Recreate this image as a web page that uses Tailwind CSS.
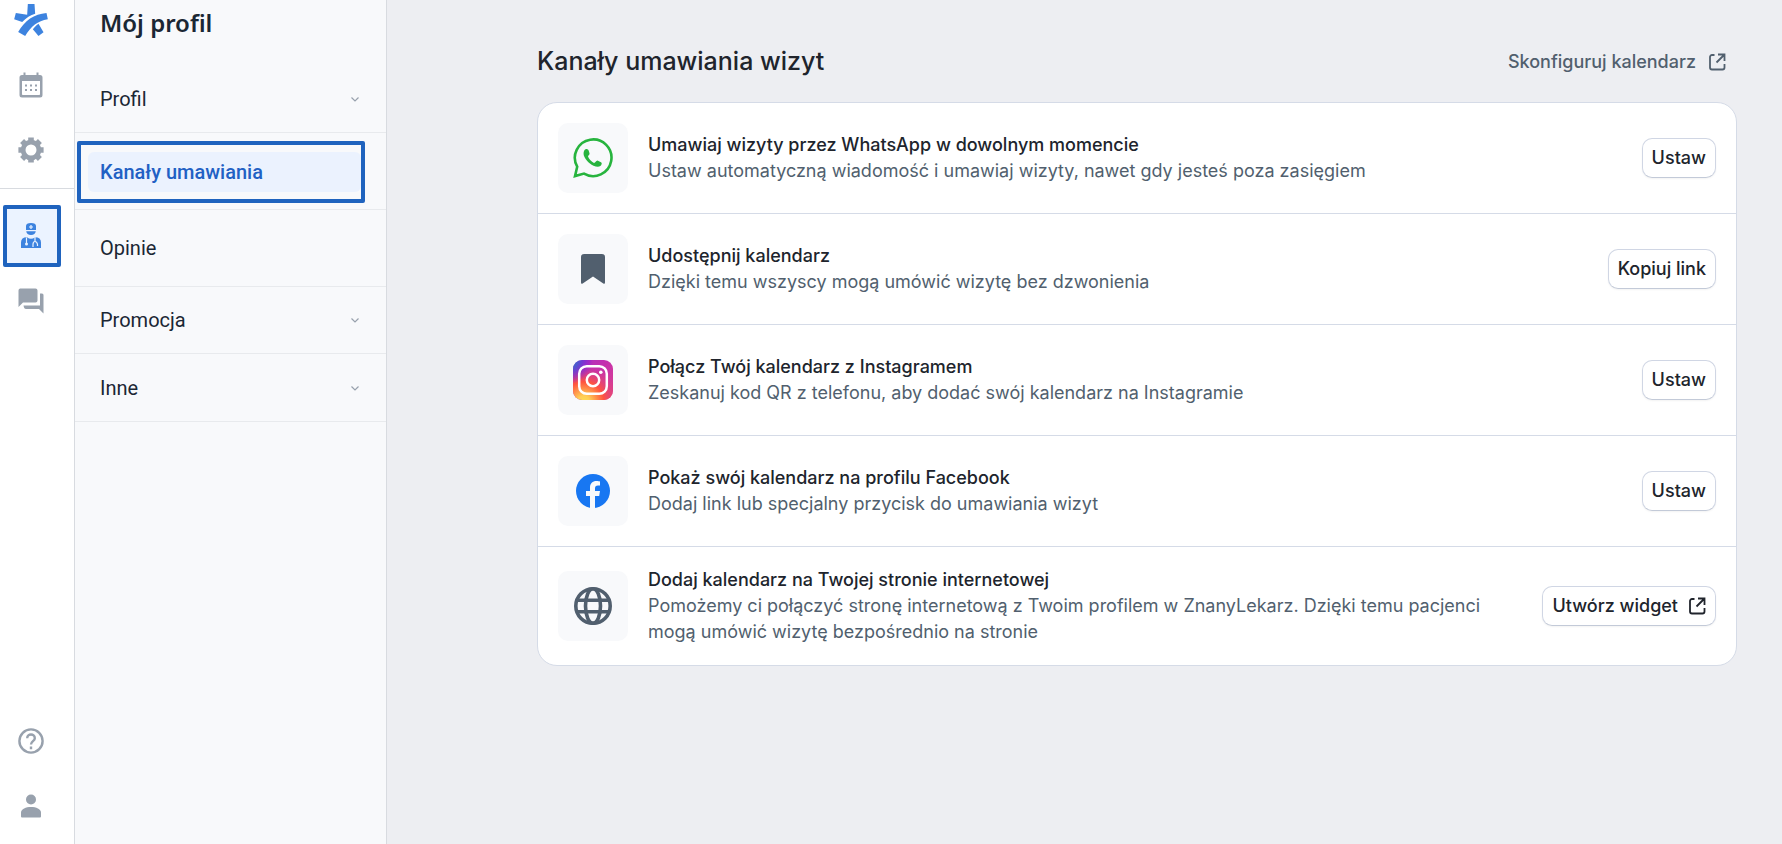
<!DOCTYPE html>
<html lang="pl">
<head>
    <meta charset="UTF-8">
    <meta name="viewport" content="width=device-width, initial-scale=1">
    <title>Kanały umawiania wizyt</title>
    <script src="https://cdn.jsdelivr.net/npm/@tailwindcss/browser@4"></script>
</head>
<body class="flex min-h-screen bg-[#edeef2] font-['Inter','Liberation_Sans',sans-serif] text-[#20242c]">

    <!-- icon rail -->
    <nav class="flex w-[75px] shrink-0 flex-col border-r border-[#d8dbe0] bg-white pt-1 text-[#98a1ad]" aria-label="Główne menu">
        <a href="#" class="flex h-8 items-center justify-center pr-3 text-[#3d83df]" aria-label="Strona główna">
            <svg class="h-8 w-[34px]" viewBox="0 0 101 96" fill="currentColor">
                <path d="M41 0H61L63 29C49 33 36 41 24 54L0 46L5 27L39 32Z"/>
                <path d="M97 27L101 46C70 51 51 67 33 96L12 84C31 50 60 30 97 27Z"/>
                <path d="M73 59L88 85L73 96L56 76C60 70 66 64 73 59Z"/>
            </svg>
        </a>
        <div class="mt-4 border-b border-[#d8dbe0] pb-[6px]">
            <a href="#" class="flex h-[65px] items-center justify-center pr-3" aria-label="Kalendarz">
                <svg class="h-[26px] w-6" viewBox="0 0 24 26">
                    <path fill="currentColor" fill-rule="evenodd" d="M4.500.5h2V3h11V.5h2V3h1.500A2.500 2.500 0 0 1 23.500 5.500v17.500a2.500 2.500 0 0 1-2.500 2.500H3A2.500 2.500 0 0 1 .5 23V5.500A2.500 2.500 0 0 1 3 3h1.500zM3 9v13.200q0 .8.800.8h16.400q.8 0 .8-.8V9z"/>
                    <path fill="currentColor" d="M6 12.500h2v2H6zM11 12.500h2v2h-2zM16 12.500h2v2h-2zM6 17h2v2H6zM11 17h2v2h-2zM16 17h2v2h-2z"/>
                </svg>
            </a>
            <a href="#" class="flex h-[65px] items-center justify-center pr-3" aria-label="Ustawienia">
                <svg class="size-[26px]" viewBox="0 0 26 26" fill="none" stroke="currentColor">
                    <circle cx="13" cy="13" r="7.900" stroke-width="4.800"/>
                    <path stroke-width="5.600" d="M13 .4v4M13 21.600v4M.4 13h4M21.600 13h4M4.100 4.100l2.400 2.400M19.500 19.500l2.400 2.400M4.100 21.900l2.400-2.400M19.500 6.500l2.400-2.400"/>
                </svg>
            </a>
        </div>
        <div class="mt-[14px]">
            <a href="#" class="flex h-[65px] items-center pl-[3px]" aria-label="Mój profil" aria-current="page">
                <span class="flex h-[62px] w-[58px] items-center justify-center rounded-xs border-4 border-[#1f63be] bg-[#ebf3ff] pr-[2px] text-[#3d83df]">
                    <svg class="h-[25px] w-5" viewBox="0 0 20 25">
                        <path fill="currentColor" d="M5 7V3Q5 0 10 0T15 3V7ZM5.200 8.300h9.600Q14.300 12 10 12T5.200 8.300ZM0 25V19.500Q0 14.300 6 14.300q4 3 8 0 6 0 6 5.200V25Z"/>
                        <path stroke="#ebf3ff" stroke-width="1.200" d="M10 2v4M8 4h4"/>
                        <path stroke="#ebf3ff" stroke-width="1.200" fill="none" d="M5.500 14.500v6M12 24v-2.500q0-3 2-3t2.500 3V23M14 18.500v-4.500"/>
                        <circle cx="5.500" cy="21" r="1.500" fill="#ebf3ff"/>
                    </svg>
                </span>
            </a>
            <a href="#" class="flex h-[65px] items-center justify-center pr-3" aria-label="Wiadomości">
                <svg class="size-[26px]" viewBox="0 0 26 26" fill="currentColor">
                    <path d="M2 .5h15.500a2 2 0 0 1 2 2v10a2 2 0 0 1-2 2H5L.5 19V2.500A2 2 0 0 1 2 .5z"/>
                    <path d="M22 5.500h2a1.500 1.500 0 0 1 1.500 1.500v18.500L21 21H8q-2 0-2.500-3.500H22z"/>
                </svg>
            </a>
        </div>
        <div class="mt-auto pb-[6px]">
            <a href="#" class="flex h-[65px] items-center justify-center pr-3" aria-label="Pomoc">
                <svg class="size-[26px]" viewBox="0 0 26 26" fill="none" stroke="currentColor" stroke-width="2.400">
                    <circle cx="13" cy="13" r="11.600"/>
                    <path d="M9.200 10.200c0-4.900 7.600-4.900 7.600 0 0 3-3.800 3-3.800 6.400M13 18.600v2.600"/>
                </svg>
            </a>
            <a href="#" class="flex h-[65px] items-center justify-center pr-3" aria-label="Konto">
                <svg class="h-6 w-5" viewBox="0 0 20 24" fill="currentColor">
                    <circle cx="10" cy="5.500" r="5"/>
                    <path d="M0 18.500C0 11 20 11 20 18.500V22.500q0 1-1 1H1q-1 0-1-1z"/>
                </svg>
            </a>
        </div>
    </nav>

    <!-- profile menu -->
    <aside class="w-[312px] shrink-0 border-r border-[#d8dbe0] bg-[#f8f9fb] pt-[7px] font-['Roboto','Liberation_Sans',sans-serif]">
        <h2 class="pl-[25px] font-['Noto_Sans',sans-serif] text-2xl leading-8 font-semibold text-[#1b2734]">Mój profil</h2>
        <ul class="mt-[27px] text-xl text-[#1b2734]">
            <li class="border-b border-[#e8eaed]">
                <button class="flex h-[66px] w-full items-center justify-between pr-[27px] pl-[25px]">
                    Profil
                    <svg class="h-2 w-2" viewBox="0 0 8 8" fill="none" stroke="#98a1ad" stroke-width="1.200"><path d="M.5 2.500L4 6l3.500-3.500"/></svg>
                </button>
            </li>
            <li class="flex h-[77px] items-center border-b border-[#e8eaed] pt-[2px] pl-[2px]">
                <a href="#" class="flex h-[62px] w-[288px] items-center rounded-xs border-4 border-[#1f63be] pl-[7px] font-medium text-[#2160c4]" aria-current="page">
                    <span class="flex h-10 flex-1 items-center rounded-md bg-[#ebf2fe] pl-3">Kanały umawiania</span>
                </a>
            </li>
            <li class="border-b border-[#e8eaed]">
                <a href="#" class="flex h-[76px] items-center pl-[25px]">Opinie</a>
            </li>
            <li class="border-b border-[#e8eaed]">
                <button class="flex h-[66px] w-full items-center justify-between pr-[27px] pl-[25px]">
                    Promocja
                    <svg class="h-2 w-2" viewBox="0 0 8 8" fill="none" stroke="#98a1ad" stroke-width="1.200"><path d="M.5 2.500L4 6l3.500-3.500"/></svg>
                </button>
            </li>
            <li class="border-b border-[#e8eaed]">
                <button class="flex h-[67px] w-full items-center justify-between pr-[27px] pl-[25px]">
                    Inne
                    <svg class="h-2 w-2" viewBox="0 0 8 8" fill="none" stroke="#98a1ad" stroke-width="1.200"><path d="M.5 2.500L4 6l3.500-3.500"/></svg>
                </button>
            </li>
        </ul>
    </aside>

    <!-- booking channels -->
    <main class="min-w-0 flex-1 pt-[42px] pr-[45px] pl-[150px]">
        <div class="flex h-10 items-center justify-between">
            <h1 class="text-[25px] font-medium">Kanały umawiania wizyt</h1>
            <a href="#" class="flex items-center gap-3 pr-[11px] text-lg font-medium text-[#515f6e]">
                Skonfiguruj kalendarz
                <svg class="size-[18px]" viewBox="0 0 18 18" fill="none" stroke="currentColor" stroke-width="1.800">
                    <path d="M6.500 2H4a2 2 0 0 0-2 2v10.500a2 2 0 0 0 2 2h10.500a2 2 0 0 0 2-2V11M10 1.500h6.500V8M16.500 1.500L8.500 9.500"/>
                </svg>
            </a>
        </div>

        <ul class="mt-5 divide-y divide-[#d5dbe7] rounded-[20px] border border-[#d5dbe7] bg-white text-lg leading-[26px]">
            <li class="flex items-center gap-5 p-5">
                <div class="flex size-[70px] shrink-0 items-center justify-center rounded-[10px] bg-[#f8f9fb]">
                    <svg class="size-10" viewBox="0 0 40 40">
                        <path fill="none" stroke="#27b43e" stroke-width="2.600" d="M4.200 28.700A18.300 18.300 0 1 1 11 35.600L2 38.100Z"/>
                        <path fill="#27b43e" d="M12.500 11.300C14 10.600 15.200 11.200 15.800 13L16.500 15.200C17 16.800 15 17.300 15 18.600C16 21.400 18.500 23.800 21 25C22.500 25 22.800 22.600 24.500 22.600L28 24.200C29.500 25 28.500 27 27.300 28C25.500 29.300 23 28.700 20.500 27.700C15.500 25.500 11.500 20.500 10.700 17C10.300 14.500 11 12 12.500 11.300Z"/>
                    </svg>
                </div>
                <div class="flex-1 pr-5">
                    <h3 class="font-medium">Umawiaj wizyty przez WhatsApp w dowolnym momencie</h3>
                    <p class="text-[#515f6e]">Ustaw automatyczną wiadomość i umawiaj wizyty, nawet gdy jesteś poza zasięgiem</p>
                </div>
                <button class="h-10 shrink-0 rounded-[10px] border border-[#d0d6e4] border-b-[#c3cad8] bg-white px-[9px] font-medium shadow-xs">Ustaw</button>
            </li>
            <li class="flex items-center gap-5 p-5">
                <div class="flex size-[70px] shrink-0 items-center justify-center rounded-[10px] bg-[#f8f9fb]">
                    <svg class="h-[30px] w-6" viewBox="0 0 24 30" fill="#515f6e">
                        <path d="M3 0H21A3 3 0 0 1 24 3V28.500Q24 30.500 22.300 29.500L12 22.500L1.700 29.500Q0 30.500 0 28.500V3A3 3 0 0 1 3 0Z"/>
                    </svg>
                </div>
                <div class="flex-1 pr-5">
                    <h3 class="font-medium">Udostępnij kalendarz</h3>
                    <p class="text-[#515f6e]">Dzięki temu wszyscy mogą umówić wizytę bez dzwonienia</p>
                </div>
                <button class="h-10 shrink-0 rounded-[10px] border border-[#d0d6e4] border-b-[#c3cad8] bg-white px-[9px] font-medium shadow-xs">Kopiuj link</button>
            </li>
            <li class="flex items-center gap-5 p-5">
                <div class="flex size-[70px] shrink-0 items-center justify-center rounded-[10px] bg-[#f8f9fb]">
                    <svg class="size-10" viewBox="0 0 40 40" fill="none">
                        <defs>
                            <linearGradient id="ig-base" x1="0" y1="0" x2="1" y2="1">
                                <stop offset="0" stop-color="#a334c4"/>
                                <stop offset=".4" stop-color="#c22fb0"/>
                                <stop offset="1" stop-color="#e0428a"/>
                            </linearGradient>
                            <radialGradient id="ig-warm" cx=".27" cy="1.050" r="1">
                                <stop offset="0" stop-color="#ffdd55"/>
                                <stop offset=".15" stop-color="#ffcf55"/>
                                <stop offset=".5" stop-color="#ff543e"/>
                                <stop offset="1" stop-color="#c837ab" stop-opacity="0"/>
                            </radialGradient>
                            <radialGradient id="ig-blue" cx="-.1" cy="0" r=".6">
                                <stop offset="0" stop-color="#3771c8"/>
                                <stop offset=".3" stop-color="#3f66cc"/>
                                <stop offset="1" stop-color="#6600ff" stop-opacity="0"/>
                            </radialGradient>
                        </defs>
                        <rect width="40" height="40" rx="9" fill="url(#ig-base)"/>
                        <rect width="40" height="40" rx="9" fill="url(#ig-warm)"/>
                        <rect width="40" height="40" rx="9" fill="url(#ig-blue)"/>
                        <rect x="6.200" y="6.200" width="27.600" height="27.600" rx="7.500" stroke="#fff" stroke-width="2.500"/>
                        <circle cx="20" cy="20" r="6.200" stroke="#fff" stroke-width="2.500"/>
                        <circle cx="27.800" cy="12.300" r="1.800" fill="#fff"/>
                    </svg>
                </div>
                <div class="flex-1 pr-5">
                    <h3 class="font-medium">Połącz Twój kalendarz z Instagramem</h3>
                    <p class="text-[#515f6e]">Zeskanuj kod QR z telefonu, aby dodać swój kalendarz na Instagramie</p>
                </div>
                <button class="h-10 shrink-0 rounded-[10px] border border-[#d0d6e4] border-b-[#c3cad8] bg-white px-[9px] font-medium shadow-xs">Ustaw</button>
            </li>
            <li class="flex items-center gap-5 p-5">
                <div class="flex size-[70px] shrink-0 items-center justify-center rounded-[10px] bg-[#f8f9fb]">
                    <svg class="size-[34px]" viewBox="0 0 34 34">
                        <circle cx="17" cy="17" r="17" fill="#1877f2"/>
                        <path fill="#f8f9fb" d="M14 34V22H10v-5h4v-3.500C14 9.500 16.500 7 20.500 7c1.500 0 3 .3 3.500.4v4.100h-2c-2.200 0-3 1.200-3 2.800V17h5l-.8 5H19v12z"/>
                    </svg>
                </div>
                <div class="flex-1 pr-5">
                    <h3 class="font-medium">Pokaż swój kalendarz na profilu Facebook</h3>
                    <p class="text-[#515f6e]">Dodaj link lub specjalny przycisk do umawiania wizyt</p>
                </div>
                <button class="h-10 shrink-0 rounded-[10px] border border-[#d0d6e4] border-b-[#c3cad8] bg-white px-[9px] font-medium shadow-xs">Ustaw</button>
            </li>
            <li class="flex items-center gap-5 p-5">
                <div class="flex size-[70px] shrink-0 items-center justify-center rounded-[10px] bg-[#f8f9fb]">
                    <svg class="size-[38px]" viewBox="0 0 38 38" fill="none" stroke="#515f6e" stroke-width="3.600">
                        <circle cx="19" cy="19" r="17.200"/>
                        <ellipse cx="19" cy="19" rx="7.500" ry="17.200"/>
                        <path d="M3 13.200H35M3 24.800H35"/>
                    </svg>
                </div>
                <div class="flex-1 pr-5">
                    <h3 class="font-medium">Dodaj kalendarz na Twojej stronie internetowej</h3>
                    <p class="text-[#515f6e]">Pomożemy ci połączyć stronę internetową z Twoim profilem w ZnanyLekarz. Dzięki temu pacjenci mogą umówić wizytę bezpośrednio na stronie</p>
                </div>
                <a href="#" class="flex h-10 shrink-0 items-center gap-[10px] rounded-[10px] border border-[#d0d6e4] border-b-[#c3cad8] bg-white px-[9px] font-medium shadow-xs">
                    Utwórz widget
                    <svg class="size-[18px]" viewBox="0 0 18 18" fill="none" stroke="currentColor" stroke-width="1.800">
                        <path d="M6.500 2H4a2 2 0 0 0-2 2v10.500a2 2 0 0 0 2 2h10.500a2 2 0 0 0 2-2V11M10 1.500h6.500V8M16.500 1.500L8.500 9.500"/>
                    </svg>
                </a>
            </li>
        </ul>
    </main>
</body>
</html>
